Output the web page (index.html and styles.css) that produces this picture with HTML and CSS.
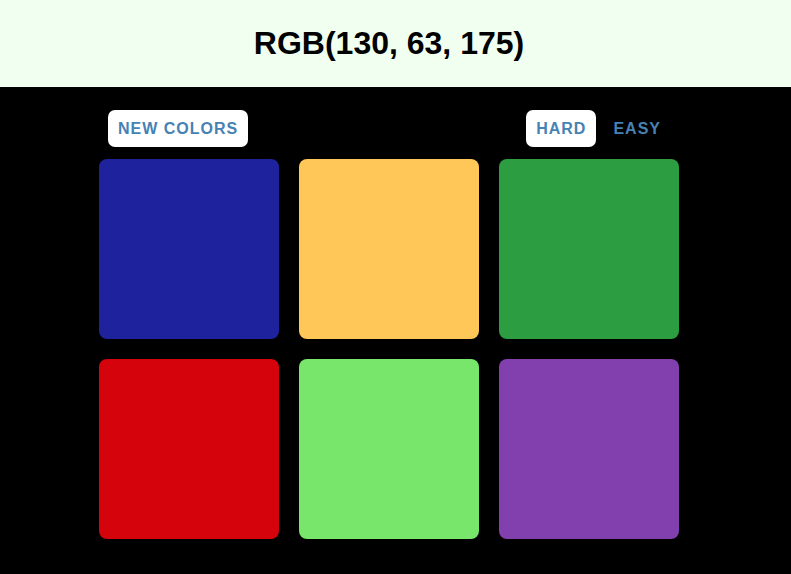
FILE: index.html
```html
<!DOCTYPE html>
<html lang="en">
<head>
<meta charset="utf-8">
<title>Color Game</title>
<link rel="stylesheet" href="styles.css">
</head>
<body>
<header class="header">
  <h1 class="title">RGB(130, 63, 175)</h1>
</header>
<nav class="nav">
  <button class="btn btn-active">NEW COLORS</button>
  <div class="modes">
    <button class="btn btn-active">HARD</button>
    <button class="btn">EASY</button>
  </div>
</nav>
<main class="grid">
  <div class="square sq-blue"></div>
  <div class="square sq-yellow"></div>
  <div class="square sq-green"></div>
  <div class="square sq-red"></div>
  <div class="square sq-lime"></div>
  <div class="square sq-purple"></div>
</main>
</body>
</html>
```
FILE: styles.css
```css
html, body {
  margin: 0;
  padding: 0;
  background: #000;
  font-family: "Liberation Sans", Arial, sans-serif;
}
.header {
  background: #f0fff0;
  height: 87px;
  display: flex;
  align-items: center;
  justify-content: center;
  padding-right: 13px;
}
.title {
  margin: 0;
  font-size: 32px;
  font-weight: bold;
  color: #000;
}
.nav {
  width: 563px;
  margin-left: 99px;
  padding: 23px 8px 12px 9px;
  display: flex;
  justify-content: space-between;
  align-items: center;
}
.modes {
  display: flex;
  gap: 7px;
}
.btn {
  font-family: "Liberation Sans", Arial, sans-serif;
  font-size: 16px;
  font-weight: bold;
  letter-spacing: 1px;
  color: #4682b4;
  background: transparent;
  border: none;
  border-radius: 7px;
  height: 37px;
  padding: 0 10px 0 10px;
  cursor: pointer;
}
.btn-active {
  background: #fff;
}
.grid {
  margin-left: 99px;
  width: 580px;
  display: grid;
  grid-template-columns: repeat(3, 180px);
  gap: 20px;
}
.square {
  width: 180px;
  height: 180px;
  border-radius: 8px;
}
.sq-blue { background: #1e229c; }
.sq-yellow { background: #ffc658; }
.sq-green { background: #2c9e41; }
.sq-red { background: #d4030c; }
.sq-lime { background: #77e66b; }
.sq-purple { background: #823fae; }
```
